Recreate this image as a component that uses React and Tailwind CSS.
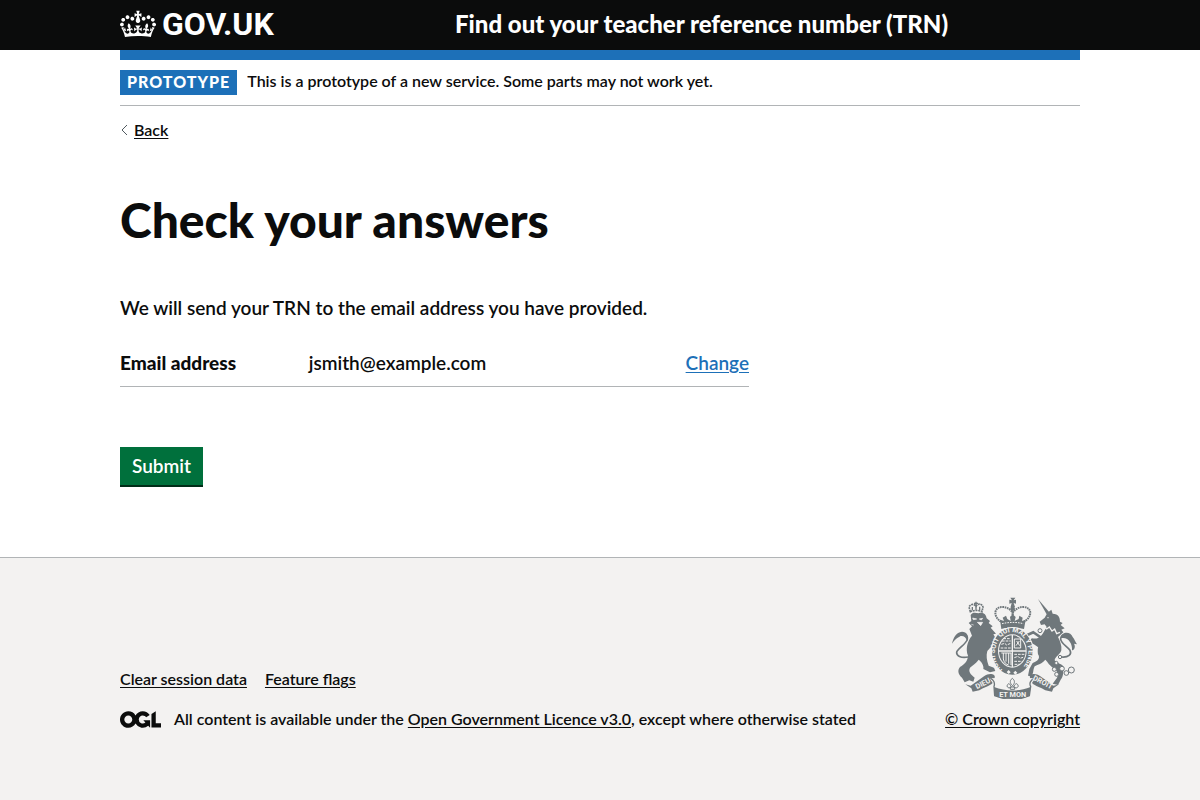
const CROWN =
  "M25 30.2c3.5 1.5 7.7-.2 9.1-3.7 1.5-3.6-.2-7.8-3.9-9.2-3.6-1.4-7.6.3-9.1 3.9-1.4 3.5.3 7.5 3.9 9zM9 39.5c3.6 1.5 7.8-.2 9.2-3.7 1.5-3.6-.2-7.8-3.9-9.1-3.6-1.5-7.6.2-9.1 3.8-1.4 3.5.3 7.5 3.8 9zM4.4 57.2c3.5 1.5 7.7-.2 9.1-3.8 1.5-3.6-.2-7.7-3.9-9.1-3.5-1.5-7.6.3-9.1 3.8-1.4 3.5.3 7.6 3.9 9.1zm38.3-21.4c3.5 1.5 7.7-.2 9.1-3.8 1.5-3.6-.2-7.7-3.9-9.1-3.6-1.5-7.6.3-9.1 3.8-1.3 3.6.4 7.7 3.9 9.1zm64.4-5.6c-3.6 1.5-7.8-.2-9.1-3.7-1.5-3.6.2-7.8 3.8-9.2 3.6-1.4 7.7.3 9.2 3.9 1.3 3.5-.4 7.5-3.9 9zm15.9 9.3c-3.6 1.5-7.7-.2-9.1-3.7-1.5-3.6.2-7.8 3.7-9.1 3.6-1.5 7.7.2 9.2 3.8 1.5 3.5-.3 7.5-3.8 9zm4.7 17.7c-3.6 1.5-7.8-.2-9.2-3.8-1.5-3.6.2-7.7 3.9-9.1 3.6-1.5 7.7.3 9.2 3.8 1.3 3.5-.4 7.6-3.9 9.1zM89.3 35.8c-3.6 1.5-7.8-.2-9.2-3.8-1.4-3.6.2-7.7 3.9-9.1 3.6-1.5 7.7.3 9.2 3.8 1.4 3.6-.3 7.7-3.9 9.1zM69.7 17.7l8.9 4.7V9.3l-8.9 2.8c-.2-.3-.5-.6-.9-.9L72.4 0H59.6l3.5 11.2c-.3.3-.6.5-.9.9l-8.8-2.8v13.1l8.8-4.7c.3.3.6.7.9.9l-5 15.4v.1c-.2.8-.4 1.6-.4 2.4 0 4.1 3.1 7.5 7 8.1h.2c.3 0 .7.1 1 .1.4 0 .7 0 1-.1h.2c4-.6 7.1-4.1 7.1-8.1 0-.8-.1-1.7-.4-2.4V34l-5.1-15.4c.4-.2.7-.6 1-.9zM66 92.8c16.9 0 32.8 1.1 47.1 3.2 4-16.9 8.9-26.7 14-33.5l-9.6-3.4c1 4.9 1.1 7.2 0 10.2-1.5-1.4-3-4.3-4.2-8.7L108.6 76c2.8-2 5-3.2 7.5-3.3-4.4 9.4-10 11.9-13.6 11.2-4.3-.8-6.3-4.6-5.6-7.9 1-4.7 5.7-5.9 8-.5 4.3-8.7-3-11.4-7.6-8.8 7.1-7.2 7.9-13.5 2.1-21.1-8 6.1-8.1 12.3-4.5 20.8-4.7-5.4-12.1-2.5-9.5 6.2 3.4-5.2 7.9-2 7.2 3.1-.6 4.3-6.4 7.8-13.5 7.2-10.3-.9-10.9-8-11.2-13.8 2.5-.5 7.1 1.8 11 7.3L80.2 60c-4.1 4.4-8 5.3-12.3 5.4 1.4-4.4 8-11.6 8-11.6H55.5s6.4 7.2 7.9 11.6c-4.2-.1-8-1-12.3-5.4l1.4 16.4c3.9-5.5 8.5-7.7 10.9-7.3-.3 5.8-.9 12.8-11.1 13.8-7.2.6-12.9-2.9-13.5-7.2-.7-5 3.8-8.3 7.1-3.1 2.7-8.7-4.6-11.6-9.4-6.2 3.7-8.5 3.6-14.7-4.6-20.8-5.8 7.6-5 13.9 2.2 21.1-4.7-2.6-11.9.1-7.7 8.8 2.3-5.5 7.1-4.2 8.1.5.7 3.3-1.3 7.1-5.7 7.9-3.5.7-9-1.8-13.5-11.2 2.5.1 4.7 1.3 7.5 3.3l-4.7-15.4c-1.2 4.4-2.7 7.2-4.3 8.7-1.1-3-.9-5.3 0-10.2l-9.5 3.4c5 6.9 9.9 16.7 14 33.5 14.8-2.1 30.8-3.2 47.7-3.2z";

const OGL =
  "M421.5 142.8V.1l-50.7 32.3v161.1h112.4v-50.7zm-122.3-9.6A47.12 47.12 0 0 1 221 97.8c0-26 21.1-47.1 47.1-47.1 16.7 0 31.4 8.7 39.7 21.8l42.7-27.2A97.63 97.63 0 0 0 268.1 0c-36.5 0-68.3 20.1-85.1 49.7A98 98 0 0 0 97.8 0C43.9 0 0 43.9 0 97.8s43.9 97.8 97.8 97.8c36.5 0 68.3-20.1 85.1-49.7a97.76 97.76 0 0 0 149.6 25.4l19.4 22.2h3v-87.8h-80l24.3 27.5zM97.8 145c-26 0-47.1-21.1-47.1-47.1s21.1-47.1 47.1-47.1 47.1 21.1 47.1 47.1S123.8 145 97.8 145";

const container = "mx-auto w-full max-w-[960px]";
const darkLink = "underline underline-offset-2";

function Crest() {
  const ink = "#6f777b";
  const paper = "#f3f2f1";
  return (
    <svg
      viewBox="36 24 375 306"
      className="h-[102px] w-[125px]"
      aria-hidden="true"
      fontFamily="Roboto, 'Liberation Sans', sans-serif"
      fontWeight="700"
    >
      {/* lion: tail, body, head, coronet */}
      <path d="M84 204C62 208 49 200 50 190C51 178 80 166 82 150C84 136 66 130 52 144" fill="none" stroke={ink} strokeWidth="5" />
      <path d="M36 164C40 146 48 130 66 128C80 128 88 140 82 156C78 144 68 138 60 142C52 146 44 152 36 164Z" fill={ink} />
      <path d="M92 78C98 68 108 72 116 73C130 68 138 76 140 88L150 96L146 102L158 112L152 116L168 134L160 136C168 146 168 156 160 166L142 186C138 200 140 214 146 230L162 236L166 246L150 250L130 240C132 228 124 218 116 212C108 224 98 228 90 236C84 248 92 256 104 266L100 278L88 274L74 280L66 266C54 256 52 244 60 234C74 226 84 214 84 200C76 180 82 156 96 140L88 120L96 112L86 102L94 96Z" fill={ink} />
      <path d="M91 68L87 54C92 44 102 44 108 52C114 42 126 44 129 54L126 68C116 63 102 63 91 68Z" fill={paper} stroke={ink} strokeWidth="5" strokeDasharray="6 2" />
      <path d="M108 38V62M102 43H114M97 54V64M119 53V63" stroke={ink} strokeWidth="4" />
      <path d="M98 87L110 90L100 92ZM118 90L128 88L124 93ZM112 100L128 100L122 110ZM94 106L101 108" fill={paper} stroke={paper} strokeWidth="2" />

      {/* unicorn: tail, body, head, horn */}
      <path d="M364 204C386 206 396 196 390 184C382 172 360 162 362 148C366 132 390 130 400 162" fill="none" stroke={ink} strokeWidth="5" />
      <path d="M362 148C364 126 392 126 398 144C404 150 406 160 411 166L402 164C408 174 402 184 396 184C398 164 384 142 362 148Z" fill={ink} />
      <path d="M294 30L328 70L320 76Z" fill={ink} />
      <path d="M322 72L334 62L338 74C356 74 360 86 360 98L368 102L362 108L374 118L364 122L370 130L354 144C360 156 366 170 364 184C360 198 344 204 344 214C352 226 366 222 372 236C368 248 372 260 362 272L354 288L338 284L350 268C356 260 354 248 344 240C328 230 324 220 316 212C308 222 300 224 292 228L284 232C278 244 282 252 274 262L264 260L268 240L278 222C298 216 300 204 294 196C292 182 294 176 296 168C284 164 276 162 270 152L276 148C288 150 300 148 308 134L320 114L314 106L303 108L299 98L314 86Z" fill={ink} />
      <path d="M310 112L320 120L328 114L336 126L344 120L350 134L360 130" fill="none" stroke={paper} strokeWidth="4" />
      <circle cx="324" cy="86" r="2" fill={paper} />
      <path d="M262 138L280 130C290 136 296 142 304 146M272 156L286 164L298 172" fill="none" stroke={ink} strokeWidth="8" />
      <g fill={paper} stroke={ink} strokeWidth="3">
        <circle cx="300" cy="125" r="6" />
        <circle cx="360" cy="204" r="5" />
        <circle cx="349" cy="222" r="5" />
        <circle cx="343" cy="241" r="6" />
        <circle cx="350" cy="256" r="6" />
        <circle cx="366" cy="239" r="7" />
        <circle cx="379" cy="252" r="7" />
        <circle cx="394" cy="243" r="9" />
      </g>

      {/* imperial crown */}
      <path d="M211 26L226 26L221 34L228 32V44L221 42L225 54H212L215 42L208 44V32L216 34Z" fill={ink} />
      <circle cx="218" cy="59" r="7" fill={ink} />
      <path d="M183 98C156 80 164 52 188 54C202 54 211 62 218 70C226 62 234 54 250 54C274 54 280 80 253 98" fill="none" stroke={ink} strokeWidth="6" strokeDasharray="5 2" />
      <path d="M218 66V98" stroke={ink} strokeWidth="7" strokeDasharray="5 2" />
      <path d="M180 92L192 96L188 86L198 80L202 90L212 96L210 84L218 76L227 84L224 96L236 90L238 80L248 86L246 96L257 92L252 120C230 114 206 114 184 120Z" fill={ink} />
      <path d="M186 104C208 99 230 99 250 104" fill="none" stroke={paper} strokeWidth="3" strokeDasharray="5 3" />

      {/* garter and quartered shield */}
      <ellipse cx="217" cy="187" rx="64" ry="73" fill={paper} />
      <ellipse cx="217" cy="187" rx="61" ry="70" fill={ink} />
      <ellipse cx="217" cy="186" rx="43" ry="50" fill={paper} />
      <ellipse cx="217" cy="186" rx="40" ry="47" fill={ink} />
      <path d="M217 138V234M176 186H258" stroke={paper} strokeWidth="4" />
      <g fill="none" stroke={paper} strokeWidth="3">
        <path d="M186 156H212M184 166L194 163L200 168L212 163M182 177H212M190 149L212 149" strokeDasharray="8 3" />
        <path d="M223 150H242V177H223ZM230 156L239 170M238 156L228 170" />
        <path d="M190 192V210C192 220 198 226 206 228M198 192V218M206 192V224M213 192V228M184 192H213" />
        <path d="M223 196H254M223 206L234 202L240 208L252 204M223 217H248M224 226H240" strokeDasharray="8 3" />
      </g>
      <path id="garter" d="M188 242C164 226 160 190 170 166C180 138 200 129 217 129C241 129 259 150 265 180C267 202 260 226 240 244" fill="none" />
      <text fill={paper} fontSize="21">
        <textPath href="#garter">HONI SOIT QUI MAL Y PENSE</textPath>
      </text>
      <path d="M200 249L206 243L212 250L206 255ZM220 251L226 245L232 251L226 257Z" fill={paper} />

      {/* motto ribbon */}
      <path d="M76 286L92 290L132 262C148 250 168 256 164 266C162 272 156 266 150 270L158 282C148 292 132 294 118 304L98 308L94 298Z" fill={ink} />
      <path d="M357 286L341 290L301 262C285 250 266 256 270 266C272 272 278 266 284 270L276 282C286 292 302 294 316 304L336 308L340 298Z" fill={ink} />
      <path d="M152 268C160 272 166 282 162 292L164 320C198 334 236 334 268 320L272 292C266 282 274 272 282 268" fill={paper} stroke={ink} strokeWidth="4" />
      <path d="M162 294C198 308 236 308 272 294L268 321C236 333 198 333 165 321Z" fill={ink} />
      <path d="M217 268C228 276 222 286 218 290C212 286 206 276 217 268ZM214 294C204 302 196 290 206 284C210 284 212 290 214 294ZM221 294C232 302 240 290 230 284C226 284 222 290 221 294ZM211 294H224V301H211Z" fill={paper} stroke={ink} strokeWidth="3" />
      <g fill={paper} fontSize="22" textAnchor="middle">
        <text transform="translate(132 290) rotate(-27)">DIEU</text>
        <text x="218" y="325">ET MON</text>
        <text transform="translate(305 286) rotate(28)">DROIT</text>
      </g>
    </svg>
  );
}

export default function App() {
  return (
    <div className="flex min-h-screen flex-col bg-white font-['Lato','Liberation_Sans',sans-serif] text-[16px] leading-5 font-semibold text-[#0b0c0c]">
      <header>
        <div className="bg-[#0b0c0c] text-white">
          <div className={`${container} flex h-[50px] items-center pb-[2px]`}>
            <div className="w-1/3">
              <a href="#home" className="flex items-center gap-1.5">
                <svg viewBox="0 0 132 97" className="h-[30px] w-9" fill="currentColor" aria-hidden="true">
                  <path d={CROWN} />
                </svg>
                <span className="font-['Roboto','Liberation_Sans',sans-serif] text-[32px] leading-[30px] font-bold">GOV.UK</span>
              </a>
            </div>
            <a href="#service" className="flex-1 pl-[15px] text-[24px] leading-[30px] font-black">
              Find out your teacher reference number (TRN)
            </a>
          </div>
        </div>
        <div className={`${container} h-[10px] bg-[#1d70b8]`} />
      </header>

      <div className={`${container} flex-1 pb-[70px]`}>
        <div className="flex items-start gap-[10px] border-b border-[#b1b4b6] py-[10px]">
          <strong className="bg-[#1d70b8] px-[7px] pt-1 pb-1.5 text-[16px] leading-[15px] font-black tracking-[1px] text-white uppercase">
            Prototype
          </strong>
          <span className="pt-px">This is a prototype of a new service. Some parts may not work yet.</span>
        </div>
        <a href="#back" className="mt-[14px] inline-flex items-center gap-1.5">
          <svg viewBox="0 0 8 12" className="h-3 w-2" fill="none" stroke="#505a5f" aria-hidden="true">
            <path d="M7 1L2 6L7 11" />
          </svg>
          <span className={darkLink}>Back</span>
        </a>

        <main className="pt-[50px]">
          <h1 className="text-[48px] leading-[60px] font-black">Check your answers</h1>
          <div className="max-w-[629px] text-[19px] leading-[25px]">
            <p className="mt-[45px]">We will send your TRN to the email address you have provided.</p>
            <dl className="mt-5 flex border-b border-[#b1b4b6] pt-[10px] pb-[11px]">
              <dt className="w-[30%] font-black">Email address</dt>
              <dd className="flex-1">jsmith@example.com</dd>
              <dd>
                <a href="#change" className="text-[#1d70b8] underline underline-offset-2">Change</a>
              </dd>
            </dl>
            <button type="submit" className="mt-[60px] h-10 border-b-2 border-[#002d18] bg-[#00703c] px-3 pb-px text-white">
              Submit
            </button>
          </div>
        </main>
      </div>

      <footer className="border-t border-[#b1b4b6] bg-[#f3f2f1] pt-[39px] pb-[71px]">
        <div className={`${container} flex items-end justify-between`}>
          <div>
            <nav className="flex gap-[18px]">
              <a href="#clear" className={darkLink}>Clear session data</a>
              <a href="#flags" className={darkLink}>Feature flags</a>
            </nav>
            <div className="mt-5 flex items-center gap-[13px]">
              <svg viewBox="0 0 483.2 195.7" className="h-[17px] w-[41px]" fill="currentColor" aria-hidden="true">
                <path d={OGL} />
              </svg>
              <span>
                All content is available under the{" "}
                <a href="#licence" className={darkLink}>Open Government Licence v3.0</a>, except where otherwise stated
              </span>
            </div>
          </div>
          <div className="flex flex-col items-end gap-[10px]">
            <div className="pr-[3px]"><Crest /></div>
            <a href="#copyright" className={darkLink}>© Crown copyright</a>
          </div>
        </div>
      </footer>
    </div>
  );
}
